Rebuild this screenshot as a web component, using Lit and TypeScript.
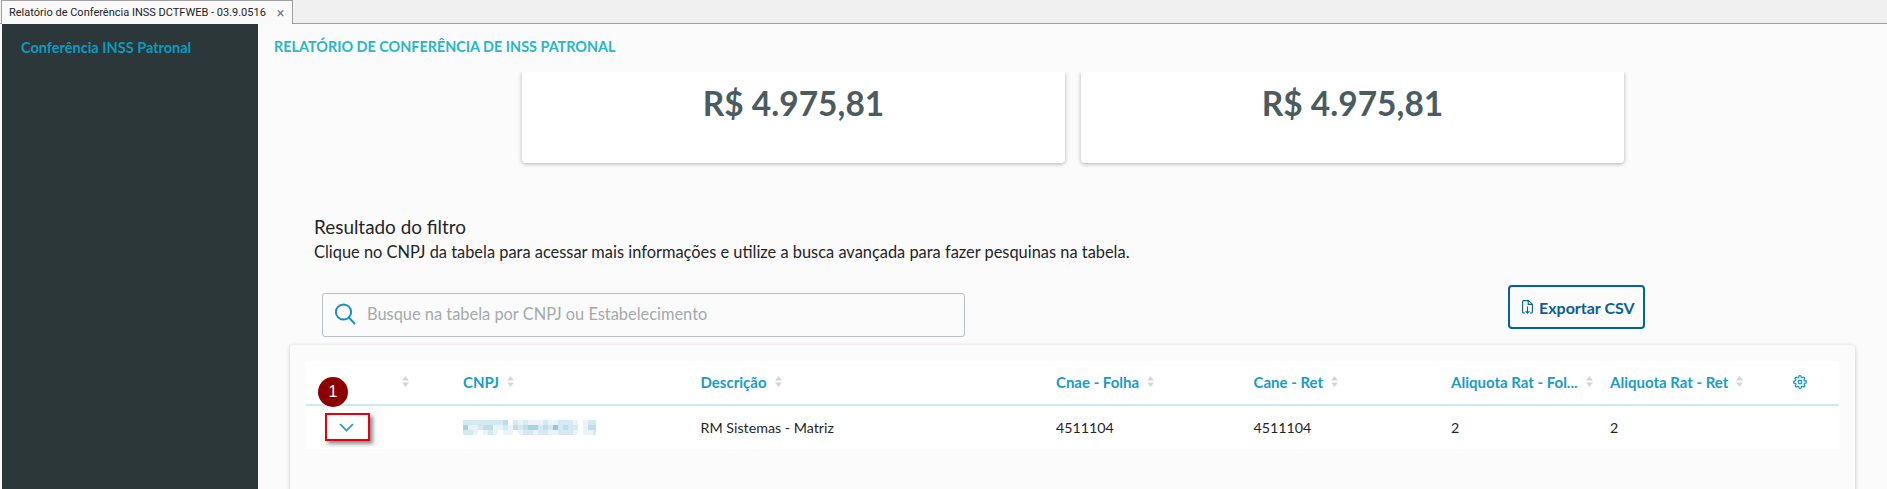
import { LitElement, html, css, svg, TemplateResult } from 'lit';
import { customElement } from 'lit/decorators.js';

const COLUMNS = ['', 'CNPJ', 'Descrição', 'Cnae - Folha', 'Cane - Ret', 'Aliquota Rat - Fol...', 'Aliquota Rat - Ret'];
const VALUES = ['RM Sistemas - Matriz', '4511104', '4511104', '2', '2'];

// blurred CNPJ, one number per 5px block (0 = white, 6 = darkest blue)
const MOSAIC = [
	'222222223021211121122210122',
	'411233112132344232523220133',
	'221012101101221221122210112',
];

@customElement('sort-arrows')
export class SortArrows extends LitElement {
	protected render(): TemplateResult {
		return html`<svg width="7" height="11" viewBox="0 0 7 11">
			<path d="M3.5 0 7 4.4H0z M3.5 11 0 6.6h7z" fill="#d2d6d8" />
		</svg>`;
	}

	static styles = css`
		:host {
			display: inline-flex;
			flex: none;
			margin-left: 8px;
		}
	`;
}

@customElement('app-root')
export class AppRoot extends LitElement {
	private card(): TemplateResult {
		return html`<div class="card">R$ 4.975,81</div>`;
	}

	private gear() {
		return svg`<svg class="gear" width="14" height="14" viewBox="0 0 24 24" fill="none" stroke="#1a9bc4" stroke-width="2.2" stroke-linecap="round" stroke-linejoin="round">
			<circle cx="12" cy="12" r="3"/>
			<path d="M19.4 15a1.65 1.65 0 0 0 .33 1.82l.06.06a2 2 0 1 1-2.83 2.83l-.06-.06a1.65 1.65 0 0 0-2.8 1.17V21a2 2 0 0 1-4 0v-.09a1.65 1.65 0 0 0-2.82-1.12l-.06.06a2 2 0 1 1-2.83-2.83l.06-.06a1.65 1.65 0 0 0-1.17-2.8H3a2 2 0 0 1 0-4h.09a1.65 1.65 0 0 0 1.12-2.82l-.06-.06a2 2 0 1 1 2.83-2.83l.06.06a1.65 1.65 0 0 0 2.8-1.17V3a2 2 0 0 1 4 0v.09a1.65 1.65 0 0 0 2.82 1.12l.06-.06a2 2 0 1 1 2.83 2.83l-.06.06a1.65 1.65 0 0 0 1.17 2.8H21a2 2 0 0 1 0 4h-.09a1.65 1.65 0 0 0-1.51 1z"/>
		</svg>`;
	}

	private mosaic(): TemplateResult {
		return html`<div class="mosaic">
			${MOSAIC.map(
				(line) => html`<div class="mosaic-line">
					${[...line].map((c) => html`<i style="opacity:${Number(c) / 6}"></i>`)}
				</div>`
			)}
		</div>`;
	}

	protected render(): TemplateResult {
		return html`
			<div class="tabbar">
				<div class="tab">
					<span>Relatório de Conferência INSS DCTFWEB - 03.9.0516</span>
					<span class="close">×</span>
				</div>
			</div>
			<div class="body">
				<nav class="sidebar">Conferência INSS Patronal</nav>
				<main>
					<header>RELATÓRIO DE CONFERÊNCIA DE INSS PATRONAL</header>
					<div class="content">
						<div class="cards">${this.card()}${this.card()}</div>
						<h2>Resultado do filtro</h2>
						<p>Clique no CNPJ da tabela para acessar mais informações e utilize a busca avançada para fazer pesquinas na tabela.</p>
						<div class="tools">
							<div class="search">
								<svg width="22" height="22" viewBox="0 0 22 22" fill="none" stroke="#1a8fb5" stroke-width="2">
									<circle cx="9.5" cy="9" r="7.6" />
									<path d="M15 14.6 20.5 20.5" stroke-linecap="round" />
								</svg>
								<span>Busque na tabela por CNPJ ou Estabelecimento</span>
							</div>
							<button class="export">
								<svg width="11" height="14" viewBox="0 0 11 14" fill="none" stroke="#0b5f8f" stroke-width="1.1">
									<path d="M3 13H1.6a1 1 0 0 1-1-1V1.6a1 1 0 0 1 1-1h4.9l3.9 3.6V12a1 1 0 0 1-1 1H8" />
									<path d="M6.2.8v3.6h4" />
									<path d="M5.5 6.5v6.6M3.6 11.2l1.9 2 1.9-2" />
								</svg>
								Exportar CSV
							</button>
						</div>
						<section class="panel">
							<div class="table">
								<div class="grid head">
									${COLUMNS.map(
										(c, i) => html`<div class="th ${i === 0 ? 'first' : ''}">
											${c ? html`<span class="label">${c}</span>` : ''}<sort-arrows></sort-arrows>
										</div>`
									)}
									<div class="th">${this.gear()}</div>
								</div>
								<div class="grid row">
									<div></div>
									<div>${this.mosaic()}</div>
									${VALUES.map((v) => html`<div class="td">${v}</div>`)}
									<div></div>
								</div>
								<div class="marker">
									<svg width="15" height="9" viewBox="0 0 15 9" fill="none" stroke="#1a9bc4" stroke-width="1.7">
										<path d="M1 1l6.5 6.5L14 1" />
									</svg>
								</div>
								<div class="badge">1</div>
							</div>
						</section>
					</div>
				</main>
			</div>
		`;
	}

	static styles = css`
		:host {
			display: flex;
			flex-direction: column;
			width: 1887px;
			height: 489px;
			overflow: hidden;
			background: #fbfbfb;
			font-family: Lato, 'Noto Sans', sans-serif;
		}

		* {
			box-sizing: border-box;
		}

		.tabbar {
			height: 24px;
			flex: none;
			background: #f0f0f0;
			border-bottom: 1px solid #a0a0a0;
			padding-left: 1px;
		}

		.tab {
			display: flex;
			align-items: center;
			width: 292px;
			height: 24px;
			padding-left: 7px;
			background: #f9f9f9;
			border: 1px solid #a0a0a0;
			border-bottom: none;
			font: 11px Roboto, sans-serif;
			color: #222;
			white-space: nowrap;
		}

		.close {
			margin-left: 11px;
			color: #777;
			font-size: 14px;
		}

		.body {
			flex: 1;
			display: flex;
			min-height: 0;
			padding-left: 2px;
		}

		.sidebar {
			width: 256px;
			flex: none;
			background: #2c3739;
			color: #0c9abe;
			font-size: 14.5px;
			font-weight: 700;
			padding: 15px 0 0 19px;
		}

		main {
			flex: 1;
			min-width: 0;
			display: flex;
			flex-direction: column;
		}

		header {
			height: 48px;
			flex: none;
			padding: 14px 0 0 16px;
			color: #29b6c5;
			font-size: 14.4px;
			font-weight: 700;
		}

		.content {
			flex: 1;
			min-height: 0;
			overflow: hidden;
			padding: 0 32px;
		}

		.cards {
			display: flex;
			gap: 16px;
			margin-left: 232px;
		}

		.card {
			width: 543px;
			height: 91px;
			padding-top: 11px;
			text-align: center;
			background: #fff;
			border-radius: 0 0 4px 4px;
			box-shadow: 0 1px 4px rgba(0, 0, 0, 0.3);
			color: #4a5c60;
			font-size: 33.5px;
			font-weight: 700;
		}

		h2 {
			margin: 52px 0 0 24px;
			font-size: 18.9px;
			line-height: 24px;
			font-weight: 400;
			color: #1f2527;
		}

		p {
			margin: 3px 0 0 24px;
			font-size: 16.4px;
			line-height: 20px;
			color: #1f2527;
		}

		.tools {
			display: flex;
			align-items: flex-start;
			height: 52px;
			margin-top: 23px;
			padding-left: 32px;
		}

		.search {
			display: flex;
			align-items: center;
			gap: 11px;
			width: 643px;
			height: 44px;
			margin-top: 8px;
			padding-left: 11px;
			border: 1px solid #b9c1c4;
			border-radius: 3px;
			color: #a3a9ab;
			font-size: 16.4px;
			line-height: 20px;
			padding-bottom: 2px;
		}

		.export {
			display: flex;
			align-items: center;
			gap: 6px;
			width: 137px;
			height: 44px;
			margin-left: 543px;
			padding: 0 0 0 12px;
			background: transparent;
			border: 2px solid #00639a;
			border-radius: 4px;
			color: #0b5f8f;
			font: 700 16px Lato, sans-serif;
		}

		.panel {
			height: 200px;
			margin-top: 8px;
			padding: 16px 16px 0;
			background: #fbfbfb;
			border-radius: 4px;
			box-shadow: 0 1px 4px rgba(0, 0, 0, 0.22);
		}

		.table {
			position: relative;
			background: #fff;
		}

		.grid {
			display: grid;
			grid-template-columns: 157px 237.5px 355.5px 197.5px 197.5px 159px 183px 1fr;
			align-items: center;
			font-size: 14.25px;
		}

		.head {
			height: 45px;
			padding-bottom: 2px;
			border-bottom: 2px solid #d0e9f1;
			color: #1a9bc4;
			font-size: 15px;
			font-weight: 700;
		}

		.th {
			display: flex;
			align-items: center;
			min-width: 0;
		}

		.th.first {
			padding-left: 88px;
		}

		.label {
			white-space: nowrap;
		}

		.row {
			height: 43px;
			padding-bottom: 1px;
			color: #1f2527;
		}

		.mosaic {
			width: 133px;
			overflow: hidden;
		}

		.mosaic-line {
			display: flex;
		}

		.mosaic-line i {
			display: block;
			flex: none;
			width: 5px;
			height: 5px;
			background: #7fbcd6;
		}

		.marker {
			position: absolute;
			left: 19px;
			top: 52px;
			width: 45px;
			height: 28px;
			padding-right: 3px;
			display: flex;
			align-items: center;
			justify-content: center;
			border: 2px solid #e6000f;
			box-shadow: 3px 3px 4px rgba(0, 0, 0, 0.45);
		}

		.badge {
			position: absolute;
			left: 12px;
			top: 16px;
			width: 30px;
			height: 30px;
			border-radius: 50%;
			background: #8b0000;
			color: #fff;
			text-align: center;
			font: 16px/30px 'Liberation Sans', sans-serif;
		}
	`;
}
